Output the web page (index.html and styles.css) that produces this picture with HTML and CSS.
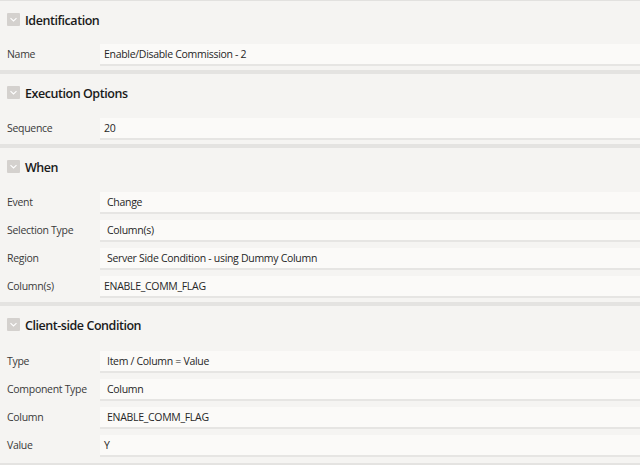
FILE: index.html
```html
<!DOCTYPE html>
<html>
<head>
<meta charset="utf-8">
<link rel="stylesheet" href="styles.css">
</head>
<body>
<div class="panel">
  <section class="group first">
    <div class="group-head">
      <span class="toggle"><svg viewBox="0 0 13 13" width="13" height="13"><path d="M3.5 5.2 L6.5 8 L9.5 5.2" fill="none" stroke="#fff" stroke-width="1.1"/></svg></span>
      <h2 class="title">Identification</h2>
    </div>
    <div class="row"><span class="label">Name</span><span class="field input">Enable/Disable Commission - 2</span></div>
  </section>
  <section class="group">
    <div class="group-head">
      <span class="toggle"><svg viewBox="0 0 13 13" width="13" height="13"><path d="M3.5 5.2 L6.5 8 L9.5 5.2" fill="none" stroke="#fff" stroke-width="1.1"/></svg></span>
      <h2 class="title">Execution Options</h2>
    </div>
    <div class="row"><span class="label">Sequence</span><span class="field input">20</span></div>
  </section>
  <section class="group">
    <div class="group-head">
      <span class="toggle"><svg viewBox="0 0 13 13" width="13" height="13"><path d="M3.5 5.2 L6.5 8 L9.5 5.2" fill="none" stroke="#fff" stroke-width="1.1"/></svg></span>
      <h2 class="title">When</h2>
    </div>
    <div class="row"><span class="label">Event</span><span class="field select">Change</span></div>
    <div class="row"><span class="label">Selection Type</span><span class="field select">Column(s)</span></div>
    <div class="row"><span class="label">Region</span><span class="field select">Server Side Condition - using Dummy Column</span></div>
    <div class="row"><span class="label">Column(s)</span><span class="field input">ENABLE_COMM_FLAG</span></div>
  </section>
  <section class="group last">
    <div class="group-head">
      <span class="toggle"><svg viewBox="0 0 13 13" width="13" height="13"><path d="M3.5 5.2 L6.5 8 L9.5 5.2" fill="none" stroke="#fff" stroke-width="1.1"/></svg></span>
      <h2 class="title">Client-side Condition</h2>
    </div>
    <div class="row"><span class="label">Type</span><span class="field select">Item / Column = Value</span></div>
    <div class="row"><span class="label">Component Type</span><span class="field select">Column</span></div>
    <div class="row"><span class="label">Column</span><span class="field select">ENABLE_COMM_FLAG</span></div>
    <div class="row"><span class="label">Value</span><span class="field input">Y</span></div>
  </section>
</div>
</body>
</html>
```
FILE: styles.css
```css
html, body {
  margin: 0;
  padding: 0;
  background: #f5f4f2;
}
body {
  font-family: "Open Sans", "Noto Sans", sans-serif;
  color: #262626;
  width: 640px;
  height: 465px;
  overflow: hidden;
}
.panel {
  display: flex;
  flex-direction: column;
}
.group {
  border-top: 4px solid #e4e3e1;
  padding-bottom: 4px;
  display: flex;
  flex-direction: column;
  gap: 6px;
}
.group.first {
  border-top: 1px solid #e2e1df;
}
.group.last {
  padding-bottom: 6px;
  border-bottom: 4px solid #e4e3e1;
}
.group-head {
  height: 44px;
  margin-bottom: -6px;
  display: flex;
  align-items: flex-start;
  padding: 12px 0 0 7px;
  box-sizing: border-box;
}
.first .group-head {
  height: 43px;
}
.last .group-head {
  height: 45px;
}
.toggle {
  width: 13px;
  height: 13px;
  background: #d4d1ce;
  border-radius: 1px;
  display: flex;
  flex-shrink: 0;
}
.title {
  margin: 0 0 0 5px;
  font-size: 12.5px;
  font-weight: 600;
  line-height: 15px;
  color: #1a1a1a;
  letter-spacing: -0.45px;
}
.row {
  display: flex;
  align-items: stretch;
  height: 22px;
}
.label {
  width: 100px;
  flex-shrink: 0;
  padding-left: 7px;
  box-sizing: border-box;
  font-size: 10.5px;
  line-height: 20px;
  color: #3a3a3a;
  letter-spacing: -0.3px;
}
.field {
  flex: 1;
  height: 20px;
  background: #fbfaf8;
  border-bottom: 2px solid #e6e5e3;
  font-size: 10.5px;
  line-height: 20px;
  color: #262626;
  letter-spacing: -0.3px;
  white-space: nowrap;
}
.field.input {
  padding-left: 4px;
}
.field.select {
  padding-left: 7px;
}
```
